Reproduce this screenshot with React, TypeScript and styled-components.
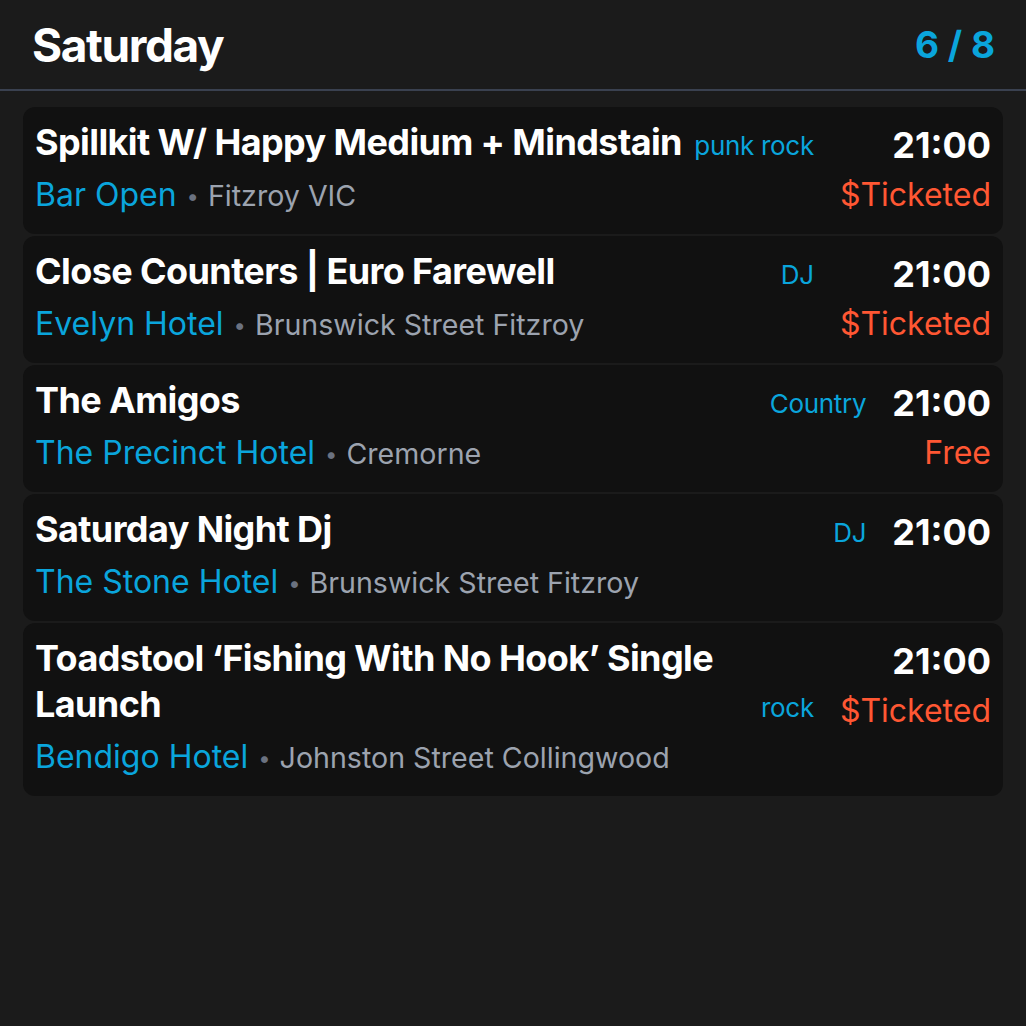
import styled, { createGlobalStyle } from "styled-components";

type Gig = {
	title: string;
	genre: string;
	venue: string;
	place: string;
	time: string;
	price?: string;
};

const gigs: Gig[] = [
	{
		title: "Spillkit W/ Happy Medium + Mindstain",
		genre: "punk rock",
		venue: "Bar Open",
		place: "Fitzroy VIC",
		time: "21:00",
		price: "$Ticketed",
	},
	{
		title: "Close Counters | Euro Farewell",
		genre: "DJ",
		venue: "Evelyn Hotel",
		place: "Brunswick Street Fitzroy",
		time: "21:00",
		price: "$Ticketed",
	},
	{
		title: "The Amigos",
		genre: "Country",
		venue: "The Precinct Hotel",
		place: "Cremorne",
		time: "21:00",
		price: "Free",
	},
	{
		title: "Saturday Night Dj",
		genre: "DJ",
		venue: "The Stone Hotel",
		place: "Brunswick Street Fitzroy",
		time: "21:00",
	},
	{
		title: "Toadstool \u2018Fishing With No Hook\u2019 Single Launch",
		genre: "rock",
		venue: "Bendigo Hotel",
		place: "Johnston Street Collingwood",
		time: "21:00",
		price: "$Ticketed",
	},
];

const App = () => {
	return (
		<Page>
			<GlobalStyle />
			<Header>
				<Day>Saturday</Day>
				<Count>6 / 8</Count>
			</Header>
			<List>
				{gigs.map((gig) => (
					<Card key={gig.title}>
						<Main>
							<TitleRow>
								<Title>{gig.title}</Title>
								<Genre>{gig.genre}</Genre>
							</TitleRow>
							<VenueRow>
								<Venue>{gig.venue}</Venue>
								<Dot>•</Dot>
								<Place>{gig.place}</Place>
							</VenueRow>
						</Main>
						<Side>
							<Time>{gig.time}</Time>
							{gig.price && <Price>{gig.price}</Price>}
						</Side>
					</Card>
				))}
			</List>
		</Page>
	);
};

const GlobalStyle = createGlobalStyle`
	html, body {
		margin: 0;
		padding: 0;
		background: #1b1b1b;
	}
	body {
		font-family: Inter, "Noto Sans", sans-serif;
		-webkit-font-smoothing: antialiased;
	}
`;

const Page = styled.div`
	min-height: 1026px;
	background: #1b1b1b;
	color: #ffffff;
`;

const Header = styled.header`
	display: flex;
	justify-content: space-between;
	align-items: center;
	padding: 17px 31px 16px 32px;
	border-bottom: 2px solid #3a4150;
`;

const Day = styled.h1`
	margin: 0;
	font-size: 46px;
	line-height: 56px;
	font-weight: 700;
	letter-spacing: -1.4px;
`;

const Count = styled.div`
	font-size: 37px;
	line-height: 56px;
	font-weight: 700;
	color: #0aa5dc;
`;

const List = styled.div`
	display: flex;
	flex-direction: column;
	gap: 2px;
	padding: 16px 23px;
`;

const Card = styled.div`
	display: flex;
	gap: 26px;
	padding: 12px 12px 15px 12px;
	background: #111111;
	border-radius: 12px;
`;

const Main = styled.div`
	flex: 1;
	min-width: 0;
`;

const TitleRow = styled.div`
	display: flex;
	align-items: last baseline;
	justify-content: space-between;
	gap: 6px;
`;

const Title = styled.div`
	font-size: 36px;
	line-height: 46px;
	font-weight: 700;
	letter-spacing: -0.6px;
`;

const Genre = styled.span`
	flex-shrink: 0;
	font-size: 26px;
	letter-spacing: -0.3px;
	color: #0aa5dc;
`;

const VenueRow = styled.div`
	margin-top: 6px;
	font-size: 32px;
	line-height: 48px;
	white-space: nowrap;
`;

const Venue = styled.span`
	color: #0aa5dc;
`;

const Dot = styled.span`
	font-size: 22px;
	line-height: 1;
	color: #6b7280;
	margin: 0 9px 0 10px;
	vertical-align: 2px;
`;

const Place = styled.span`
	font-size: 28.6px;
	line-height: 1;
	color: #9ca3af;
`;

const Side = styled.div`
	display: flex;
	flex-direction: column;
	align-items: flex-end;
	flex-shrink: 0;
`;

const Time = styled.div`
	margin-top: 3px;
	font-size: 36px;
	line-height: 46px;
	font-weight: 700;
`;

const Price = styled.div`
	margin-top: 3px;
	font-size: 32px;
	line-height: 48px;
	color: #ff5733;
`;

export default App;
